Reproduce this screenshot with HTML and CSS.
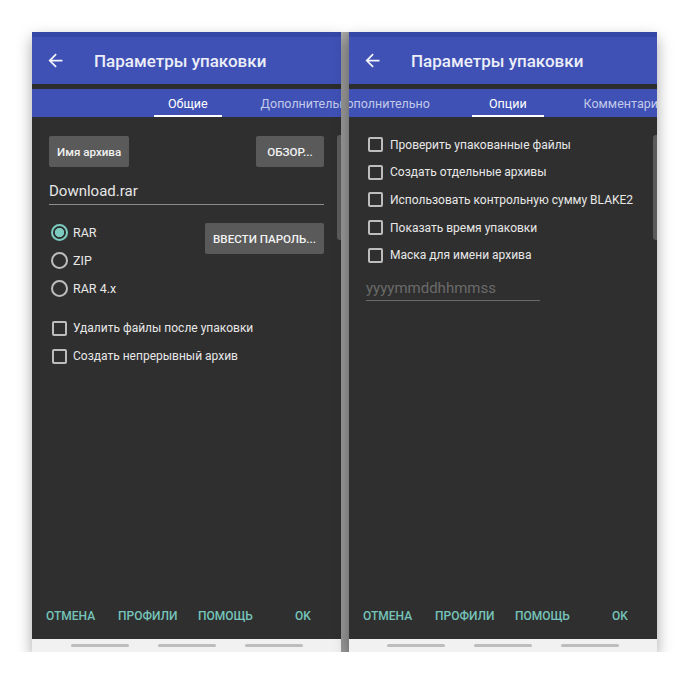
FILE: index.html
```html
<!DOCTYPE html>
<html lang="ru">
<head>
<meta charset="utf-8">
<title>Параметры упаковки</title>
<link rel="stylesheet" href="styles.css">
</head>
<body>
<div class="stage">
  <section class="panel panel-left">
    <div class="status"></div>
    <header class="appbar">
      <svg class="back" viewBox="0 0 24 24"><path d="M20 11H7.83l5.59-5.59L12 4l-8 8 8 8 1.41-1.41L7.83 13H20v-2z" fill="#f2f3fb"/></svg>
      <h1 class="title">Параметры упаковки</h1>
    </header>
    <div class="divider"></div>
    <nav class="tabs tabs-left">
      <span class="tab active">Общие</span>
      <span class="tab">Дополнительно</span>
    </nav>
    <main class="content general">
      <div class="row-top">
        <button class="btn">Имя архива</button>
        <button class="btn btn-browse">ОБЗОР...</button>
      </div>
      <div class="field">Download.rar</div>
      <div class="format-row">
        <div class="radios">
          <div class="opt"><span class="radio on"></span>RAR</div>
          <div class="opt"><span class="radio"></span>ZIP</div>
          <div class="opt"><span class="radio"></span>RAR 4.x</div>
        </div>
        <button class="btn btn-pass">ВВЕСТИ ПАРОЛЬ...</button>
      </div>
      <div class="checks">
        <div class="check"><span class="box"></span>Удалить файлы после упаковки</div>
        <div class="check"><span class="box"></span>Создать непрерывный архив</div>
      </div>
      <div class="scroll"></div>
    </main>
    <footer class="actions">
      <span class="action">ОТМЕНА</span>
      <span class="action">ПРОФИЛИ</span>
      <span class="action">ПОМОЩЬ</span>
      <span class="action">OK</span>
    </footer>
    <div class="navbar"><span class="pill"></span><span class="pill"></span><span class="pill"></span></div>
  </section>
  <div class="gap"></div>
  <section class="panel panel-right">
    <div class="status"></div>
    <header class="appbar">
      <svg class="back" viewBox="0 0 24 24"><path d="M20 11H7.83l5.59-5.59L12 4l-8 8 8 8 1.41-1.41L7.83 13H20v-2z" fill="#f2f3fb"/></svg>
      <h1 class="title">Параметры упаковки</h1>
    </header>
    <div class="divider"></div>
    <nav class="tabs tabs-right">
      <span class="tab">Дополнительно</span>
      <span class="tab active">Опции</span>
      <span class="tab">Комментарий</span>
    </nav>
    <main class="content options">
      <div class="check wide"><span class="box"></span>Проверить упакованные файлы</div>
      <div class="check wide"><span class="box"></span>Создать отдельные архивы</div>
      <div class="check wide"><span class="box"></span>Использовать контрольную сумму BLAKE2</div>
      <div class="check wide"><span class="box"></span>Показать время упаковки</div>
      <div class="check wide"><span class="box"></span>Маска для имени архива</div>
      <div class="mask-field">yyyymmddhhmmss</div>
      <div class="scroll"></div>
    </main>
    <footer class="actions">
      <span class="action">ОТМЕНА</span>
      <span class="action">ПРОФИЛИ</span>
      <span class="action">ПОМОЩЬ</span>
      <span class="action">OK</span>
    </footer>
    <div class="navbar"><span class="pill"></span><span class="pill"></span><span class="pill"></span></div>
  </section>
</div>
</body>
</html>
```

FILE: styles.css
```css
* { box-sizing: border-box; }
body {
  margin: 0;
  background: #ffffff;
  font-family: Roboto, "Noto Sans", sans-serif;
}
.stage {
  display: flex;
  padding: 32px 0 0 32px;
}
.panel {
  position: relative;
  width: 309px;
  height: 620px;
  display: flex;
  flex-direction: column;
  background: #2f2f2f;
  box-shadow: 0 6px 14px rgba(0, 0, 0, 0.35);
  overflow: hidden;
}
.panel-right { width: 308px; }
.gap {
  width: 8px;
  height: 620px;
  background: linear-gradient(90deg, #b4b4b4, #9c9c9c);
}
.status { height: 5px; background: #3646a6; flex: none; }
.appbar {
  flex: none;
  height: 47px;
  background: #3f51b5;
  display: flex;
  align-items: center;
}
.back { width: 21px; height: 21px; margin-left: 13px; flex: none; }
.title {
  margin: 0 0 0 28px;
  font-size: 17px;
  font-weight: 500;
  color: #eceef8;
  white-space: nowrap;
}
.divider { height: 5px; background: #2c2c2c; flex: none; }
.tabs {
  flex: none;
  height: 28px;
  background: #3f51b5;
  display: flex;
  gap: 28px;
  white-space: nowrap;
  overflow: hidden;
}
.tab {
  flex: none;
  padding: 3px 14px 0;
  font-size: 12.5px;
  line-height: 23px;
  color: #c3c9ea;
  border-bottom: 2px solid transparent;
}
.tab.active { color: #ffffff; border-bottom-color: #ffffff; }
.tabs-left { padding-left: 122px; gap: 25px; }
.tabs-right .tab:first-child { margin-left: -26px; }
.tabs-right .tab.active { padding: 3px 17px 0; }
.tabs-right .tab:last-child { margin-left: -2px; }

.content { flex: 1; position: relative; }
.general { padding: 19px 17px 0; }
.options { padding: 14px 19px 0; }

.row-top { display: flex; justify-content: space-between; }
.btn {
  height: 31px;
  padding: 0 8px;
  border: 0;
  border-radius: 2px;
  background: #5a5a5a;
  color: #f2f2f2;
  font-family: Roboto, "Noto Sans", sans-serif;
  font-size: 11.6px;
  font-weight: 500;
}
.btn-browse { min-width: 68px; }
.btn-pass { margin-top: 5px; }

.field {
  margin-top: 14px;
  font-size: 15px;
  line-height: 20px;
  color: #e6e6e6;
  padding-bottom: 3px;
  border-bottom: 1px solid #8c8c8c;
}
.format-row {
  margin-top: 13px;
  display: flex;
  justify-content: space-between;
  align-items: flex-start;
}
.opt {
  display: flex;
  align-items: center;
  gap: 5px;
  height: 28px;
  font-size: 12.5px;
  color: #e8e8e8;
}
.radio {
  width: 17px;
  height: 17px;
  margin-left: 2px;
  border: 2px solid #bdbdbd;
  border-radius: 50%;
}
.radio.on {
  border-color: #7ccbc1;
  background: radial-gradient(circle, #7ccbc1 4.3px, transparent 5px);
}
.checks { margin-top: 12px; }
.check {
  display: flex;
  align-items: center;
  gap: 6px;
  height: 28px;
  font-size: 12px;
  color: #e8e8e8;
  white-space: nowrap;
}
.check.wide { height: 27.6px; gap: 7px; }
.box {
  flex: none;
  width: 15px;
  height: 15px;
  margin-left: 3px;
  border: 2px solid #bdbdbd;
  border-radius: 2px;
}
.check.wide .box { margin-left: 0; }
.mask-field {
  width: 174px;
  margin: 9px 0 0 -2px;
  font-size: 15px;
  line-height: 20px;
  color: #6a6a6a;
  padding-bottom: 2px;
  border-bottom: 1px solid #6a6a6a;
}
.scroll {
  position: absolute;
  right: 0;
  top: 18px;
  width: 4px;
  height: 105px;
  background: #5b5b5b;
  border-radius: 3px 0 0 3px;
}
.actions {
  flex: none;
  height: 46px;
  display: grid;
  grid-template-columns: 72px 80px 97px auto;
  align-items: center;
  padding-left: 14px;
}
.action {
  font-size: 12px;
  font-weight: 500;
  color: #76c4ba;
}
.navbar {
  flex: none;
  height: 13px;
  background: #f1f1f1;
  display: flex;
  justify-content: center;
  align-items: center;
  gap: 29px;
}
.pill {
  width: 58px;
  height: 3px;
  border-radius: 2px;
  background: #bdbdbd;
}
```
